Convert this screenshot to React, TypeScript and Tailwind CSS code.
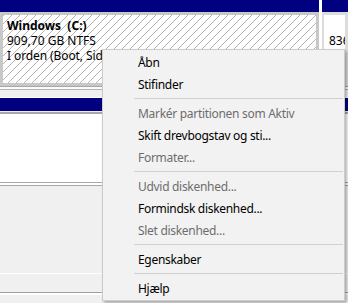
import React from 'react'

type Item = { label: string; disabled?: boolean } | 'sep'

const items: Item[] = [
  { label: 'Åbn' },
  { label: 'Stifinder' },
  'sep',
  { label: 'Markér partitionen som Aktiv', disabled: true },
  { label: 'Skift drevbogstav og sti...' },
  { label: 'Formater...', disabled: true },
  'sep',
  { label: 'Udvid diskenhed...', disabled: true },
  { label: 'Formindsk diskenhed...' },
  { label: 'Slet diskenhed...', disabled: true },
  'sep',
  { label: 'Egenskaber' },
  'sep',
  { label: 'Hjælp' },
]

const hatch =
  'bg-[repeating-linear-gradient(135deg,#b4b4b4_0px,#b4b4b4_0.8px,#ffffff_0.8px,#ffffff_5.66px)]'

function ContextMenu() {
  return (
    <div className="absolute left-[102px] top-[49px] w-[243px] border border-[#cccccc] bg-[#f2f2f2] py-[1px] shadow-[2px_2px_3px_rgba(0,0,0,0.3)]">
      {items.map((it, i) =>
        it === 'sep' ? (
          <div key={i} className="flex h-[7px] items-center pl-[31px] pr-[1px]">
            <div className="h-px w-full bg-[#d0d0d0]" />
          </div>
        ) : (
          <div
            key={i}
            className={`flex h-[22px] items-center pl-[35px] text-[12px] tracking-[-0.3px] ${
              it.disabled ? 'text-[#6d6d6d]' : 'text-black'
            }`}
          >
            {it.label}
          </div>
        )
      )}
    </div>
  )
}

export default function App() {
  return (
    <div className="relative h-[303px] w-[348px] overflow-hidden bg-[#f0f0f0] font-['Noto_Sans',sans-serif] leading-[15px]">
      {/* Disk 0 partitions */}
      <div className="flex h-[86px] bg-white">
        <div className="flex w-[319px] flex-col">
          <div className="h-[12px] bg-[#000080]" />
          <div className={`flex-1 border-[3px] border-[#c8c8c8] px-[4px] pt-[3px] text-[12px] text-black ${hatch}`}>
            <div className="whitespace-pre font-bold">Windows  (C:)</div>
            <div>909,70 GB NTFS</div>
            <div className="whitespace-nowrap tracking-[-0.1px]">I orden (Boot, Sidefil, Crashdump, Primær partition)</div>
          </div>
        </div>
        <div className="w-[3px] bg-white" />
        <div className="flex flex-1 flex-col overflow-hidden">
          <div className="h-[12px] bg-[#000080]" />
          <div className="flex-1 overflow-hidden border-[3px] border-l-[2px] border-[#dcdcdc] bg-white pl-[5px] pt-[3px] text-[12px] text-black">
            <div>&nbsp;</div>
            <div className="whitespace-nowrap">836 MB</div>
          </div>
        </div>
      </div>

      {/* Gap between disks */}
      <div className="h-px bg-[#a8a8a8]" />
      <div className="h-[2px] bg-[#fafafa]" />
      <div className="h-px bg-[#b4b4b4]" />
      <div className="h-[7px] bg-[#f0f0f0]" />
      <div className="h-px bg-white" />

      {/* Disk 1 */}
      <div className="h-[13px] bg-[#000080]" />
      <div className="h-px bg-[#f0f0f0]" />
      <div className="h-[2px] bg-[#a8a8a8]" />
      <div className="h-[68px] bg-white" />
      <div className="h-px bg-[#a8a8a8]" />
      <div className="h-[2px] bg-white" />
      <div className="h-px bg-[#a8a8a8]" />
      <div className="h-[87px] bg-[#f0f0f0]" />
      <div className="h-px bg-white" />
      <div className="h-[18px] bg-[#f0f0f0]" />
      <div className="h-px bg-[#a0a0a0]" />
      <div className="h-[2px] bg-white" />
      <div className="h-[8px] bg-[#f0f0f0]" />

      <ContextMenu />
    </div>
  )
}
